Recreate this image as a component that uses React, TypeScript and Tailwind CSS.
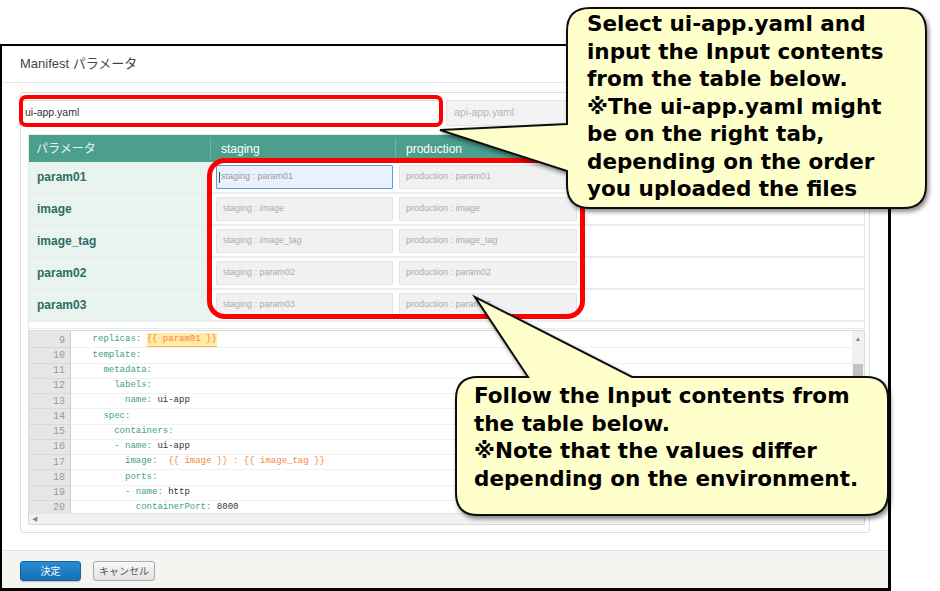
import React from 'react';

const params = ['param01', 'image', 'image_tag', 'param02', 'param03'];

type Seg = { t: string; c?: 'k' | 'v' | 'o' | 'h' };

const code: { n: number; segs: Seg[] }[] = [
  { n: 9, segs: [{ t: '    replicas: ', c: 'k' }, { t: '{{ param01 }}', c: 'h' }] },
  { n: 10, segs: [{ t: '    template:', c: 'k' }] },
  { n: 11, segs: [{ t: '      metadata:', c: 'k' }] },
  { n: 12, segs: [{ t: '        labels:', c: 'k' }] },
  { n: 13, segs: [{ t: '          name: ', c: 'k' }, { t: 'ui-app', c: 'v' }] },
  { n: 14, segs: [{ t: '      spec:', c: 'k' }] },
  { n: 15, segs: [{ t: '        containers:', c: 'k' }] },
  { n: 16, segs: [{ t: '        - name: ', c: 'k' }, { t: 'ui-app', c: 'v' }] },
  { n: 17, segs: [{ t: '          image:  ', c: 'k' }, { t: '{{ image }} : {{ image_tag }}', c: 'o' }] },
  { n: 18, segs: [{ t: '          ports:', c: 'k' }] },
  { n: 19, segs: [{ t: '          - name: ', c: 'k' }, { t: 'http', c: 'v' }] },
  { n: 20, segs: [{ t: '            containerPort: ', c: 'k' }, { t: '8000', c: 'v' }] },
];

const segClass = {
  k: 'text-[#3f9e8a]',
  v: 'text-[#333]',
  o: 'text-[#f5893c]',
  h: 'text-[#f5893c] bg-[#ffeaa6] border-b border-[#f3b45a]',
};

const ParamInput: React.FC<{ text: string; focused?: boolean }> = ({ text, focused }) => (
  <div
    className={
      'h-[24px] flex items-center pl-[6px] text-[9px] rounded-[1px] border ' +
      (focused ? 'bg-[#e8f1fd] border-[#5b9be0] text-[#9a9a9a]' : 'bg-[#f1f1f1] border-[#e2e2e2] text-[#ababab]')
    }
  >
    {focused && <span className="w-px h-[11px] bg-[#444] mr-px -ml-[4px]" />}
    {text}
  </div>
);

const App: React.FC = () => {
  return (
    <div className="relative w-[940px] h-[591px] bg-white overflow-hidden font-['Liberation_Sans','Noto_Sans_CJK_JP',sans-serif]">
      <div className="pt-[44px]">
        <div className="w-[891px] h-[547px] border-t-2 border-l-2 border-r-[3px] border-b-[3px] border-black bg-white flex flex-col">
          {/* header */}
          <div className="h-[37px] border-b border-[#e6e6e6] flex items-center pl-[18px] text-[13px] text-[#444]">
            Manifest パラメータ
          </div>

          {/* body */}
          <div className="px-[18px] pt-[9px]">
            <div className="h-[441px] border border-[#dedede] rounded-[3px] pt-[7px]">
              {/* tabs */}
              <div className="flex pl-px h-[26px]">
                <div className="w-[418px] bg-white border border-[#dcdcdc] flex items-center pl-[2px] text-[10.5px] text-[#333]">
                  ui-app.yaml
                </div>
                <div className="w-[418px] ml-[6px] bg-[#f3f3f3] border border-[#e4e4e4] flex items-center pl-[7px] text-[10.5px] text-[#b5b5b5]">
                  api-app.yaml
                </div>
              </div>

              {/* table */}
              <div className="mt-[8px] ml-[7px] mr-[4px] border border-[#e2ecea]">
                <div className="h-[27px] bg-[#4b9f8c] flex items-center text-white text-[12px]">
                  <div className="w-[182px] pl-[7px] h-[21px] flex items-center border-r border-[#6fb3a4] text-[#e8f4f1]">パラメータ</div>
                  <div className="w-[185px] pl-[10px] h-[21px] flex items-center border-r border-[#6fb3a4]">staging</div>
                  <div className="w-[185px] pl-[10px]">production</div>
                </div>
                {params.map((p, i) => (
                  <div key={p} className="h-[32px] flex border-b-2 border-[#e6f1ee]">
                    <div className="w-[182px] bg-[#e9f4f1] flex items-center pl-[8px] text-[12px] font-bold text-[#2e6d60]">
                      {p}
                    </div>
                    <div className="w-[185px] pl-[4px] pr-[3px] pt-[3px] border-l border-[#e6f1ee]">
                      <ParamInput text={'staging : ' + p} focused={i === 0} />
                    </div>
                    <div className="w-[185px] pl-[3px] pr-[4px] pt-[3px]">
                      <ParamInput text={'production : ' + p} />
                    </div>
                    <div className="flex-1" />
                  </div>
                ))}
                <div className="h-[6px]" />
              </div>

              {/* editor */}
              <div className="mt-px ml-[7px] mr-[4px] h-[195px] border border-[#dadada] flex flex-col bg-white">
                <div className="flex flex-1 min-h-0">
                  <div className="w-[42px] bg-[#e6e6e6] border-r border-[#cdcdcd] pt-[2px]">
                    {code.map((l) => (
                      <div
                        key={l.n}
                        className="h-[15.25px] border-b border-[#d9d9d9] flex items-center justify-end pr-[5px] text-[10px] text-[#9a9a9a] font-['Liberation_Mono',monospace]"
                      >
                        {l.n}
                      </div>
                    ))}
                  </div>
                  <div className="flex-1 pt-[2px]">
                    {code.map((l) => (
                      <div
                        key={l.n}
                        className="h-[15.25px] border-b border-[#f1f1f1] flex items-center whitespace-pre text-[9px] font-['Liberation_Mono',monospace]"
                      >
                        {l.segs.map((s, j) => (
                          <span key={j} className={segClass[s.c || 'v']}>
                            {s.t}
                          </span>
                        ))}
                      </div>
                    ))}
                  </div>
                  <div className="w-[12px] bg-[#f1f1f1] flex flex-col items-center">
                    <span className="mt-[5px] text-[6px] leading-none text-[#777]">▲</span>
                    <div className="mt-[22px] w-[10px] h-[60px] bg-[#c3c3c3]" />
                  </div>
                </div>
                <div className="h-[11px] bg-[#f1f1f1] border-t border-[#e3e3e3] flex items-center pl-[3px]">
                  <span className="text-[6px] leading-none text-[#888]">◀</span>
                </div>
              </div>
            </div>
          </div>

          {/* footer */}
          <div className="mt-auto h-[38px] bg-[#f4f4f0] border-t border-[#e2e2e2] flex items-start pt-[10px] pl-[18px]">
            <button className="w-[61px] h-[20px] rounded-[3px] bg-gradient-to-b from-[#2a8bd2] to-[#1670b3] border border-[#15629d] text-white text-[10px] flex items-center justify-center shadow-[0_1px_1px_rgba(0,0,0,0.2)]">
              決定
            </button>
            <button className="ml-[12px] w-[62px] h-[20px] rounded-[3px] bg-gradient-to-b from-[#f8f8f8] to-[#e2e2e2] border border-[#acacac] text-[#555] text-[10px] flex items-center justify-center">
              キャンセル
            </button>
          </div>
        </div>
      </div>

      {/* red highlight boxes */}
      <div className="absolute left-[19px] top-[95px] w-[424px] h-[32px] border-4 border-[#ff0000] rounded-[7px]" />
      <div className="absolute left-[207px] top-[158px] w-[378px] h-[161px] border-[5px] border-[#ff0000] rounded-[18px]" />

      {/* callout shapes */}
      <svg className="absolute inset-0 pointer-events-none" width="940" height="591" viewBox="0 0 940 591">
        <defs>
          <filter id="sh" x="-10%" y="-10%" width="130%" height="130%">
            <feDropShadow dx="2" dy="3" stdDeviation="2" floodColor="#000" floodOpacity="0.45" />
          </filter>
        </defs>
        <path
          d="M590 8 H903 Q926 8 926 31 V185 Q926 208 903 208 H590 Q567 208 567 185 V171 L440 130 L567 124 V31 Q567 8 590 8 Z"
          fill="#ffffcc"
          stroke="#111"
          strokeWidth="2"
          filter="url(#sh)"
        />
        <path
          d="M478 377 H528 L475 297 L632 377 H866 Q888 377 888 399 V493 Q888 515 866 515 H478 Q456 515 456 493 V399 Q456 377 478 377 Z"
          fill="#ffffcc"
          stroke="#111"
          strokeWidth="2"
          filter="url(#sh)"
        />
      </svg>

      {/* callout texts */}
      <div className="absolute left-[587px] top-[10px] text-[21.5px] leading-[27.5px] font-bold text-black whitespace-nowrap font-['DejaVu_Sans','Noto_Sans_CJK_JP',sans-serif]">
        Select ui-app.yaml and
        <br />
        input the Input contents
        <br />
        from the table below.
        <br />
        ※The ui-app.yaml might
        <br />
        be on the right tab,
        <br />
        depending on the order
        <br />
        you uploaded the files
      </div>
      <div className="absolute left-[474px] top-[382px] text-[21.5px] leading-[27.5px] font-bold text-black whitespace-nowrap font-['DejaVu_Sans','Noto_Sans_CJK_JP',sans-serif]">
        Follow the Input contents from
        <br />
        the table below.
        <br />
        ※Note that the values differ
        <br />
        depending on the environment.
      </div>
    </div>
  );
};

export default App;
